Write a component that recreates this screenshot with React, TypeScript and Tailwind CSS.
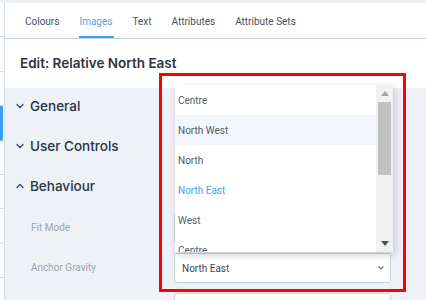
import React from "react";

const font = { fontFamily: "Inter, 'Noto Sans', sans-serif" };
const small = { fontFamily: "Roboto, 'Liberation Sans', sans-serif" };

function Chevron({ up = false }: { up?: boolean }) {
  return (
    <svg width="8" height="6" viewBox="0 0 8 6" className="shrink-0">
      <path
        d={up ? "M1 4.5 L4 1.5 L7 4.5" : "M1 1.5 L4 4.5 L7 1.5"}
        fill="none"
        stroke="#3a4456"
        strokeWidth="1.3"
        strokeLinecap="round"
        strokeLinejoin="round"
      />
    </svg>
  );
}

function SelectBox({ value }: { value?: string }) {
  return (
    <div className="w-[217px] h-[30px] shrink-0 bg-white border border-[#cbd3de] rounded-[3px] flex items-center justify-between pl-[7px] pr-[5px]">
      <span className="text-[10px] text-[#4a3f5c]" style={small}>{value ?? ""}</span>
      {value !== undefined && (
        <svg width="8" height="6" viewBox="0 0 8 6">
          <path d="M1.5 1.5 L4 4 L6.5 1.5" fill="none" stroke="#6b7280" strokeWidth="1.1" />
        </svg>
      )}
    </div>
  );
}

export default function App() {
  const tabs = ["Colours", "Images", "Text", "Attributes", "Attribute Sets"];
  const options = ["Centre", "North West", "North", "North East", "West", "Centre"];
  return (
    <div className="relative w-[426px] h-[300px] overflow-hidden bg-[#eef1f4]" style={font}>
      <div className="h-[3px] bg-[#eef1f4]" />
      <div className="flex h-[297px] overflow-hidden">
        {/* left strip */}
        <div className="w-[5px] bg-white border-r border-[#d3dbe5] flex flex-col shrink-0">
          {Array.from({ length: 9 }).map((_, i) => (
            <div
              key={i}
              className={
                "h-[34.4px] shrink-0 border-b border-[#d3dbe5] " +
                (i === 3 ? "border-l-[3px] border-l-[#3b9cf0]" : "")
              }
            />
          ))}
        </div>
        {/* main */}
        <div className="flex-1 flex flex-col">
          <div className="bg-white h-[36px] shrink-0 border-b border-[#c7d0dc] flex pl-[10px]" style={small}>
            {tabs.map((t) => (
              <div key={t} className="relative px-[10px] flex items-center pt-[1px]">
                <span
                  className={
                    "text-[10px] " + (t === "Images" ? "text-[#5aa2ee]" : "text-[#4a4f5e]")
                  }
                >
                  {t}
                </span>
                {t === "Images" && (
                  <div className="absolute left-[10px] right-[8px] bottom-0 h-[2px] bg-[#3aa0f2]" />
                )}
              </div>
            ))}
          </div>
          <div className="bg-white h-[49px] shrink-0 flex items-center pl-[15px] pb-[1px]">
            <span className="text-[13.5px] font-semibold text-[#2e3440]">
              Edit: Relative North East
            </span>
          </div>
          <div className="flex-1 bg-[#eef2f6] flex flex-col">
            {[
              { t: "General", up: false },
              { t: "User Controls", up: false },
              { t: "Behaviour", up: true },
            ].map((s) => (
              <div key={s.t} className="h-[40px] shrink-0 flex items-center gap-[6px] pl-[11px] pb-[4px]">
                <Chevron up={s.up} />
                <span className="text-[13.5px] font-medium text-[#27344a]">{s.t}</span>
              </div>
            ))}
            {[
              { l: "Fit Mode", v: "" },
              { l: "Anchor Gravity", v: "North East" },
              { l: "", v: undefined },
            ].map((f, i) => (
              <div key={i} className="h-[40px] shrink-0 flex items-center">
                <span className="w-[169px] pl-[26px] text-[10px] text-[#9ea4ad] pb-[1px]" style={small}>{f.l}</span>
                <SelectBox value={f.v} />
              </div>
            ))}
          </div>
        </div>
      </div>

      {/* dropdown list overlay */}
      <div
        className="absolute left-[175px] top-[85px] w-[218px] h-[167px] bg-white flex shadow-[2px_3px_8px_rgba(0,0,0,0.18)] overflow-hidden"
        style={small}
      >
        <div className="flex-1 flex flex-col">
          {options.map((o, i) => (
            <div
              key={i}
              className={
                "h-[30px] shrink-0 flex items-center pl-[3px] text-[10px] " +
                (i === 1 ? "bg-[#f3f7fd] " : "") +
                (i === 3 ? "text-[#4a9ee8]" : "text-[#555b66]")
              }
            >
              {o}
            </div>
          ))}
        </div>
        <div className="w-[17px] bg-[#f1f1f1] flex flex-col items-center">
          <div className="h-[17px] flex items-center justify-center">
            <svg width="8" height="5" viewBox="0 0 8 5">
              <path d="M0 5 L4 0 L8 5 Z" fill="#a3a3a3" />
            </svg>
          </div>
          <div className="w-[13px] h-[73px] bg-[#c1c1c1]" />
          <div className="flex-1" />
          <div className="h-[17px] flex items-center justify-center">
            <svg width="8" height="5" viewBox="0 0 8 5">
              <path d="M0 0 L8 0 L4 5 Z" fill="#505050" />
            </svg>
          </div>
        </div>
      </div>

      {/* red annotation */}
      <div className="absolute left-[159px] top-[73px] w-[247px] h-[219px] border-[3px] border-[#ff0000]" />
    </div>
  );
}
